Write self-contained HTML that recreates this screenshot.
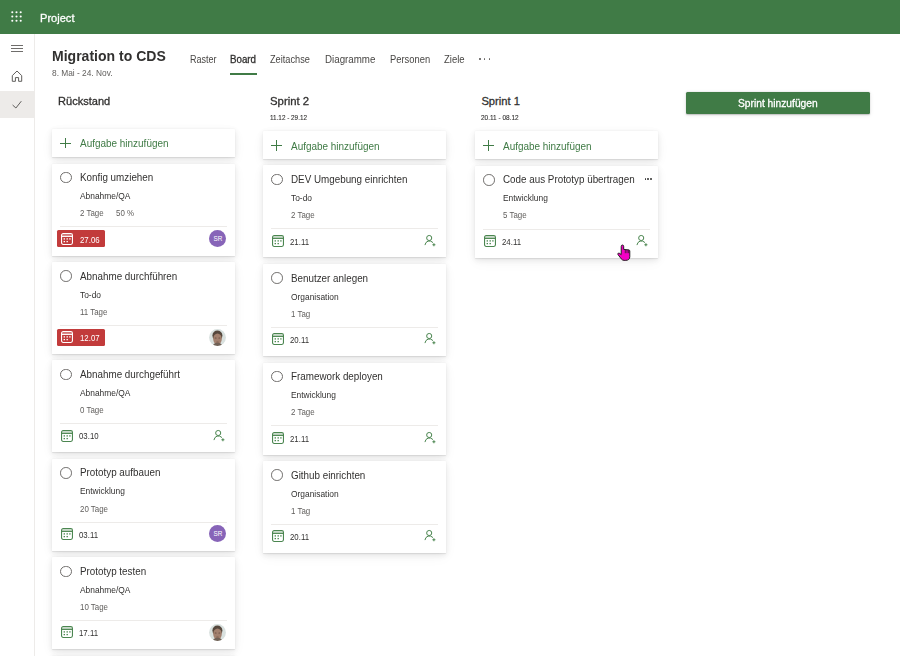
<!DOCTYPE html>
<html><head><meta charset="utf-8"><title>Project Board</title><style>
*{margin:0;padding:0;box-sizing:border-box}
html,body{width:900px;height:656px;overflow:hidden;background:#fff;font-family:"Liberation Sans",sans-serif}
.t{position:absolute;white-space:nowrap;line-height:1;transform-origin:0 0}
.ic{position:absolute;overflow:visible}
#hdr{position:absolute;left:0;top:0;width:900px;height:34px;background:#407b46}
#rail{position:absolute;left:0;top:34px;width:34.5px;height:622px;border-right:1px solid #edebe9;background:#fff}
#railsel{position:absolute;left:0;top:90.5px;width:34px;height:27.6px;background:#edebe9}
.ham{position:absolute;left:11px;top:45px;width:11.6px}
.ham i{display:block;height:1px;background:#6f6d6b;margin-bottom:2px}
#uline{position:absolute;left:229.6px;top:73px;width:27.4px;height:2px;background:#407b46}
.more{position:absolute;left:479px;top:58.3px;width:12px;height:2px}
.more i{position:absolute;top:0;width:1.5px;height:1.5px;border-radius:50%;background:#605e5c}
.more i:nth-child(1){left:0}.more i:nth-child(2){left:4.8px}.more i:nth-child(3){left:9.6px}
#addsprint{position:absolute;left:686.2px;top:91.5px;width:183.6px;height:22.7px;background:#407b46;border-radius:1.5px;box-shadow:0 0.5px 1.5px rgba(0,0,0,.22),0 1px 5px rgba(0,0,0,.08)}
.card{position:absolute;width:183px;height:92px;background:#fff;border-radius:0.5px;box-shadow:0 2px 6px rgba(0,0,0,.095),0 0.3px 1.2px rgba(0,0,0,.09),0 4px 14px rgba(0,0,0,.04)}
.card.add{height:28.1px}
.plus{position:absolute;width:11px;height:11px}
.plus i{position:absolute;left:0;top:5px;width:11px;height:1px;background:#407b46}
.plus b{position:absolute;left:5px;top:0;width:1px;height:10.8px;background:#407b46}
.circ{position:absolute;width:11.6px;height:11.6px;border:1px solid #6f6d6b;border-radius:50%}
.div{position:absolute;width:166.5px;height:1px;background:#edebe9}
.late{position:absolute;width:47.5px;height:16.8px;background:#c23b3b;border-radius:1.5px}
.av{position:absolute;width:17px;height:17px;border-radius:50%;background:#8764b8;color:#fff;font-size:6.4px;font-weight:400;text-align:center;line-height:17.6px;letter-spacing:-0.1px}
.avp{position:absolute;width:17px;height:17px;border-radius:50%;background:radial-gradient(circle at 50% 45%,#b0866a 0,#8a6048 35%,#5b4034 60%,#8f9a96 75%,#c9d0cc 100%)}
.dots{position:absolute;width:9px;height:2px}
.dots i{position:absolute;top:-0.2px;width:1.9px;height:1.9px;border-radius:50%;background:#323130}
.dots i:nth-child(1){left:0}.dots i:nth-child(2){left:2.9px}.dots i:nth-child(3){left:5.8px}
</style></head>
<body>
<div id="hdr"></div>
<svg class="ic" style="left:10px;top:10px" width="14" height="14" viewBox="0 0 14 14"><g fill="#fff"><circle cx="2.3" cy="2.3" r="1.05"/><circle cx="6.5" cy="2.3" r="1.05"/><circle cx="10.7" cy="2.3" r="1.05"/><circle cx="2.3" cy="6.5" r="1.05"/><circle cx="6.5" cy="6.5" r="1.05"/><circle cx="10.7" cy="6.5" r="1.05"/><circle cx="2.3" cy="10.7" r="1.05"/><circle cx="6.5" cy="10.7" r="1.05"/><circle cx="10.7" cy="10.7" r="1.05"/></g></svg>
<div class="t" style="left:40.00px;top:13px;font-size:11.2px;color:#ffffff;font-weight:400;transform:scaleX(0.99);-webkit-text-stroke:0.3px #fff;">Project</div>
<div id="rail"></div>
<div id="railsel"></div>
<div class="ham"><i></i><i></i><i></i></div>
<svg class="ic" style="left:11px;top:70px" width="12" height="12" viewBox="0 0 12 12"><path d="M1.3 11.3 V5.6 L6 1 L10.7 5.6 V11.3 H7.6 V7.6 H4.4 V11.3 Z" fill="none" stroke="#605e5c" stroke-width="1" stroke-linejoin="round"/></svg>
<svg class="ic" style="left:11px;top:99px" width="12" height="12" viewBox="0 0 12 12"><path d="M1.6 6.0 L4.9 9.0 L10.3 2.2" fill="none" stroke="#605e5c" stroke-width="1"/></svg>
<div class="t" style="left:52.00px;top:48px;font-size:15.0px;color:#323130;font-weight:700;transform:scaleX(0.935);">Migration to CDS</div>
<div class="t" style="left:52.10px;top:69px;font-size:8.4px;color:#605e5c;font-weight:400;transform:scaleX(0.995);">8. Mai - 24. Nov.</div>
<div class="t" style="left:190.40px;top:55px;font-size:10.0px;color:#484644;font-weight:400;transform:scaleX(0.9);">Raster</div>
<div class="t" style="left:230.00px;top:55px;font-size:10.0px;color:#323130;font-weight:400;transform:scaleX(0.975);-webkit-text-stroke:0.3px #323130;">Board</div>
<div class="t" style="left:269.70px;top:55px;font-size:10.0px;color:#484644;font-weight:400;transform:scaleX(0.92);">Zeitachse</div>
<div class="t" style="left:325.10px;top:55px;font-size:10.0px;color:#484644;font-weight:400;transform:scaleX(0.975);">Diagramme</div>
<div class="t" style="left:390.10px;top:55px;font-size:10.0px;color:#484644;font-weight:400;transform:scaleX(0.937);">Personen</div>
<div class="t" style="left:443.70px;top:55px;font-size:10.0px;color:#484644;font-weight:400;transform:scaleX(0.95);">Ziele</div>
<div id="uline"></div>
<div class="more"><i></i><i></i><i></i></div>
<div class="t" style="left:58.30px;top:96px;font-size:11.2px;color:#323130;font-weight:400;transform:scaleX(0.988);-webkit-text-stroke:0.3px #323130;">Rückstand</div>
<div class="t" style="left:270.00px;top:96px;font-size:11.2px;color:#323130;font-weight:400;transform:scaleX(1.015);-webkit-text-stroke:0.3px #323130;">Sprint 2</div>
<div class="t" style="left:269.50px;top:114px;font-size:7.4px;color:#323130;font-weight:400;transform:scaleX(0.86);-webkit-text-stroke:0.12px #323130;">11.12 - 29.12</div>
<div class="t" style="left:481.40px;top:96px;font-size:11.2px;color:#323130;font-weight:400;-webkit-text-stroke:0.3px #323130;">Sprint 1</div>
<div class="t" style="left:480.90px;top:114px;font-size:7.4px;color:#323130;font-weight:400;transform:scaleX(0.875);-webkit-text-stroke:0.12px #323130;">20.11 - 08.12</div>
<div id="addsprint"></div>
<div class="t" style="left:737.50px;top:98px;font-size:10.5px;color:#ffffff;font-weight:400;transform:scaleX(0.975);-webkit-text-stroke:0.3px #fff;">Sprint hinzufügen</div>
<div class="card add" style="left:52.00px;top:128.60px"></div>
<div class="plus" style="left:59.80px;top:137.50px"><i></i><b></b></div>
<div class="t" style="left:79.90px;top:139px;font-size:10.0px;color:#407b46;font-weight:400;transform:scaleX(0.995);">Aufgabe hinzufügen</div>
<div class="card add" style="left:263.00px;top:131.20px"></div>
<div class="plus" style="left:270.80px;top:140.10px"><i></i><b></b></div>
<div class="t" style="left:290.90px;top:142px;font-size:10.0px;color:#407b46;font-weight:400;transform:scaleX(0.995);">Aufgabe hinzufügen</div>
<div class="card add" style="left:475.00px;top:131.20px"></div>
<div class="plus" style="left:482.80px;top:140.10px"><i></i><b></b></div>
<div class="t" style="left:502.90px;top:142px;font-size:10.0px;color:#407b46;font-weight:400;transform:scaleX(0.995);">Aufgabe hinzufügen</div>
<div class="card" style="left:52.00px;top:163.50px"></div>
<div class="circ" style="left:60.00px;top:171.90px"></div>
<div class="t" style="left:80.10px;top:173px;font-size:10.3px;color:#323130;font-weight:400;transform:scaleX(0.955);">Konfig umziehen</div>
<div class="t" style="left:80.10px;top:192px;font-size:8.8px;color:#323130;font-weight:400;transform:scaleX(0.955);">Abnahme/QA</div>
<div class="t" style="left:80.10px;top:209px;font-size:8.7px;color:#605e5c;font-weight:400;transform:scaleX(0.91);">2 Tage</div>
<div class="t" style="left:115.60px;top:209px;font-size:8.7px;color:#605e5c;font-weight:400;transform:scaleX(0.91);">50 %</div>
<div class="div" style="left:60.00px;top:226.30px"></div>
<div class="late" style="left:57.10px;top:230.40px"></div>
<svg class="ic" style="left:61.00px;top:232.80px" width="12" height="12" viewBox="0 0 12 12"><rect x="0.55" y="0.55" width="10.9" height="10.9" rx="1.6" fill="none" stroke="#ffffff" stroke-width="1.1"/><rect x="1" y="1" width="10" height="2.4" fill="#ffffff" fill-opacity="0.3"/><line x1="0.6" y1="3.4" x2="11.4" y2="3.4" stroke="#ffffff" stroke-width="1.1"/><g fill="#ffffff"><rect x="2.6" y="5.25" width="1.4" height="1.3"/><rect x="5.5" y="5.25" width="1.4" height="1.3"/><rect x="8.2" y="5.25" width="1.4" height="1.3"/><rect x="2.6" y="7.95" width="1.4" height="1.3"/><rect x="5.5" y="7.95" width="1.4" height="1.3"/></g></svg><div class="t" style="left:79.60px;top:236px;font-size:8.8px;color:#ffffff;font-weight:400;transform:scaleX(0.89);">27.06</div>
<div class="av" style="left:209.40px;top:230.10px">SR</div>
<div class="card" style="left:52.00px;top:261.90px"></div>
<div class="circ" style="left:60.00px;top:270.30px"></div>
<div class="t" style="left:80.10px;top:272px;font-size:10.3px;color:#323130;font-weight:400;transform:scaleX(0.955);">Abnahme durchführen</div>
<div class="t" style="left:80.10px;top:291px;font-size:8.8px;color:#323130;font-weight:400;transform:scaleX(0.955);">To-do</div>
<div class="t" style="left:80.10px;top:308px;font-size:8.7px;color:#605e5c;font-weight:400;transform:scaleX(0.91);">11 Tage</div>
<div class="div" style="left:60.00px;top:324.70px"></div>
<div class="late" style="left:57.10px;top:328.80px"></div>
<svg class="ic" style="left:61.00px;top:331.20px" width="12" height="12" viewBox="0 0 12 12"><rect x="0.55" y="0.55" width="10.9" height="10.9" rx="1.6" fill="none" stroke="#ffffff" stroke-width="1.1"/><rect x="1" y="1" width="10" height="2.4" fill="#ffffff" fill-opacity="0.3"/><line x1="0.6" y1="3.4" x2="11.4" y2="3.4" stroke="#ffffff" stroke-width="1.1"/><g fill="#ffffff"><rect x="2.6" y="5.25" width="1.4" height="1.3"/><rect x="5.5" y="5.25" width="1.4" height="1.3"/><rect x="8.2" y="5.25" width="1.4" height="1.3"/><rect x="2.6" y="7.95" width="1.4" height="1.3"/><rect x="5.5" y="7.95" width="1.4" height="1.3"/></g></svg><div class="t" style="left:79.60px;top:334px;font-size:8.8px;color:#ffffff;font-weight:400;transform:scaleX(0.89);">12.07</div>
<svg class="ic" style="left:209.40px;top:328.50px" width="17" height="17" viewBox="0 0 17 17"><defs><clipPath id="ac"><circle cx="8.5" cy="8.5" r="8.4"/></clipPath><filter id="af" x="-10%" y="-10%" width="120%" height="120%"><feGaussianBlur stdDeviation="0.35"/></filter></defs><g clip-path="url(#ac)"><rect width="17" height="17" fill="#d9e1df"/><g filter="url(#af)"><ellipse cx="8.4" cy="6.6" rx="5.0" ry="5.0" fill="#55473c"/><ellipse cx="8.5" cy="10.0" rx="4.3" ry="5.6" fill="#a2806e"/><ellipse cx="8.5" cy="17.2" rx="4.8" ry="3.4" fill="#6f6055"/><ellipse cx="6.7" cy="9.0" rx="1.0" ry="0.5" fill="#6a5044"/><ellipse cx="10.3" cy="9.0" rx="1.0" ry="0.5" fill="#6a5044"/><ellipse cx="8.5" cy="12.9" rx="1.5" ry="0.5" fill="#7a5c4e"/></g></g></svg><div class="card" style="left:52.00px;top:360.30px"></div>
<div class="circ" style="left:60.00px;top:368.70px"></div>
<div class="t" style="left:80.10px;top:370px;font-size:10.3px;color:#323130;font-weight:400;transform:scaleX(0.955);">Abnahme durchgeführt</div>
<div class="t" style="left:80.10px;top:389px;font-size:8.8px;color:#323130;font-weight:400;transform:scaleX(0.955);">Abnahme/QA</div>
<div class="t" style="left:80.10px;top:406px;font-size:8.7px;color:#605e5c;font-weight:400;transform:scaleX(0.91);">0 Tage</div>
<div class="div" style="left:60.00px;top:423.10px"></div>
<svg class="ic" style="left:61.30px;top:429.60px" width="12" height="12" viewBox="0 0 12 12"><rect x="0.55" y="0.55" width="10.9" height="10.9" rx="1.6" fill="none" stroke="#4b8650" stroke-width="1.1"/><rect x="1" y="1" width="10" height="2.4" fill="#4b8650" fill-opacity="0.3"/><line x1="0.6" y1="3.4" x2="11.4" y2="3.4" stroke="#4b8650" stroke-width="1.1"/><g fill="#4b8650"><rect x="2.6" y="5.25" width="1.4" height="1.3"/><rect x="5.5" y="5.25" width="1.4" height="1.3"/><rect x="8.2" y="5.25" width="1.4" height="1.3"/><rect x="2.6" y="7.95" width="1.4" height="1.3"/><rect x="5.5" y="7.95" width="1.4" height="1.3"/></g></svg><div class="t" style="left:79.40px;top:432px;font-size:8.8px;color:#323130;font-weight:400;transform:scaleX(0.89);">03.10</div>
<svg class="ic" style="left:212.60px;top:429.70px" width="12" height="12" viewBox="0 0 12 12"><circle cx="5.2" cy="3.0" r="2.55" fill="none" stroke="#4b8650" stroke-width="1"/><path d="M1.0 9.7 A4.5 4.5 0 0 1 8.7 7.3" fill="none" stroke="#4b8650" stroke-width="1" stroke-linecap="round"/><path d="M9.9 8.3 V11.3 M8.4 9.8 H11.4" stroke="#4b8650" stroke-width="1.05"/></svg><div class="card" style="left:52.00px;top:458.70px"></div>
<div class="circ" style="left:60.00px;top:467.10px"></div>
<div class="t" style="left:80.10px;top:468px;font-size:10.3px;color:#323130;font-weight:400;transform:scaleX(0.955);">Prototyp aufbauen</div>
<div class="t" style="left:80.10px;top:487px;font-size:8.8px;color:#323130;font-weight:400;transform:scaleX(0.955);">Entwicklung</div>
<div class="t" style="left:80.10px;top:505px;font-size:8.7px;color:#605e5c;font-weight:400;transform:scaleX(0.91);">20 Tage</div>
<div class="div" style="left:60.00px;top:521.50px"></div>
<svg class="ic" style="left:61.30px;top:528.00px" width="12" height="12" viewBox="0 0 12 12"><rect x="0.55" y="0.55" width="10.9" height="10.9" rx="1.6" fill="none" stroke="#4b8650" stroke-width="1.1"/><rect x="1" y="1" width="10" height="2.4" fill="#4b8650" fill-opacity="0.3"/><line x1="0.6" y1="3.4" x2="11.4" y2="3.4" stroke="#4b8650" stroke-width="1.1"/><g fill="#4b8650"><rect x="2.6" y="5.25" width="1.4" height="1.3"/><rect x="5.5" y="5.25" width="1.4" height="1.3"/><rect x="8.2" y="5.25" width="1.4" height="1.3"/><rect x="2.6" y="7.95" width="1.4" height="1.3"/><rect x="5.5" y="7.95" width="1.4" height="1.3"/></g></svg><div class="t" style="left:79.40px;top:531px;font-size:8.8px;color:#323130;font-weight:400;transform:scaleX(0.89);">03.11</div>
<div class="av" style="left:209.40px;top:525.30px">SR</div>
<div class="card" style="left:52.00px;top:557.10px"></div>
<div class="circ" style="left:60.00px;top:565.50px"></div>
<div class="t" style="left:80.10px;top:567px;font-size:10.3px;color:#323130;font-weight:400;transform:scaleX(0.955);">Prototyp testen</div>
<div class="t" style="left:80.10px;top:586px;font-size:8.8px;color:#323130;font-weight:400;transform:scaleX(0.955);">Abnahme/QA</div>
<div class="t" style="left:80.10px;top:603px;font-size:8.7px;color:#605e5c;font-weight:400;transform:scaleX(0.91);">10 Tage</div>
<div class="div" style="left:60.00px;top:619.90px"></div>
<svg class="ic" style="left:61.30px;top:626.40px" width="12" height="12" viewBox="0 0 12 12"><rect x="0.55" y="0.55" width="10.9" height="10.9" rx="1.6" fill="none" stroke="#4b8650" stroke-width="1.1"/><rect x="1" y="1" width="10" height="2.4" fill="#4b8650" fill-opacity="0.3"/><line x1="0.6" y1="3.4" x2="11.4" y2="3.4" stroke="#4b8650" stroke-width="1.1"/><g fill="#4b8650"><rect x="2.6" y="5.25" width="1.4" height="1.3"/><rect x="5.5" y="5.25" width="1.4" height="1.3"/><rect x="8.2" y="5.25" width="1.4" height="1.3"/><rect x="2.6" y="7.95" width="1.4" height="1.3"/><rect x="5.5" y="7.95" width="1.4" height="1.3"/></g></svg><div class="t" style="left:79.40px;top:629px;font-size:8.8px;color:#323130;font-weight:400;transform:scaleX(0.89);">17.11</div>
<svg class="ic" style="left:209.40px;top:623.70px" width="17" height="17" viewBox="0 0 17 17"><defs><clipPath id="ac"><circle cx="8.5" cy="8.5" r="8.4"/></clipPath><filter id="af" x="-10%" y="-10%" width="120%" height="120%"><feGaussianBlur stdDeviation="0.35"/></filter></defs><g clip-path="url(#ac)"><rect width="17" height="17" fill="#d9e1df"/><g filter="url(#af)"><ellipse cx="8.4" cy="6.6" rx="5.0" ry="5.0" fill="#55473c"/><ellipse cx="8.5" cy="10.0" rx="4.3" ry="5.6" fill="#a2806e"/><ellipse cx="8.5" cy="17.2" rx="4.8" ry="3.4" fill="#6f6055"/><ellipse cx="6.7" cy="9.0" rx="1.0" ry="0.5" fill="#6a5044"/><ellipse cx="10.3" cy="9.0" rx="1.0" ry="0.5" fill="#6a5044"/><ellipse cx="8.5" cy="12.9" rx="1.5" ry="0.5" fill="#7a5c4e"/></g></g></svg><div class="card" style="left:52px;top:655.7px"></div>
<div class="card" style="left:263.00px;top:165.40px"></div>
<div class="circ" style="left:271.00px;top:173.80px"></div>
<div class="t" style="left:291.10px;top:175px;font-size:10.3px;color:#323130;font-weight:400;transform:scaleX(0.955);">DEV Umgebung einrichten</div>
<div class="t" style="left:291.10px;top:194px;font-size:8.8px;color:#323130;font-weight:400;transform:scaleX(0.955);">To-do</div>
<div class="t" style="left:291.10px;top:211px;font-size:8.7px;color:#605e5c;font-weight:400;transform:scaleX(0.91);">2 Tage</div>
<div class="div" style="left:271.00px;top:228.20px"></div>
<svg class="ic" style="left:272.30px;top:234.70px" width="12" height="12" viewBox="0 0 12 12"><rect x="0.55" y="0.55" width="10.9" height="10.9" rx="1.6" fill="none" stroke="#4b8650" stroke-width="1.1"/><rect x="1" y="1" width="10" height="2.4" fill="#4b8650" fill-opacity="0.3"/><line x1="0.6" y1="3.4" x2="11.4" y2="3.4" stroke="#4b8650" stroke-width="1.1"/><g fill="#4b8650"><rect x="2.6" y="5.25" width="1.4" height="1.3"/><rect x="5.5" y="5.25" width="1.4" height="1.3"/><rect x="8.2" y="5.25" width="1.4" height="1.3"/><rect x="2.6" y="7.95" width="1.4" height="1.3"/><rect x="5.5" y="7.95" width="1.4" height="1.3"/></g></svg><div class="t" style="left:290.40px;top:238px;font-size:8.8px;color:#323130;font-weight:400;transform:scaleX(0.89);">21.11</div>
<svg class="ic" style="left:423.60px;top:234.80px" width="12" height="12" viewBox="0 0 12 12"><circle cx="5.2" cy="3.0" r="2.55" fill="none" stroke="#4b8650" stroke-width="1"/><path d="M1.0 9.7 A4.5 4.5 0 0 1 8.7 7.3" fill="none" stroke="#4b8650" stroke-width="1" stroke-linecap="round"/><path d="M9.9 8.3 V11.3 M8.4 9.8 H11.4" stroke="#4b8650" stroke-width="1.05"/></svg><div class="card" style="left:263.00px;top:263.95px"></div>
<div class="circ" style="left:271.00px;top:272.35px"></div>
<div class="t" style="left:291.10px;top:274px;font-size:10.3px;color:#323130;font-weight:400;transform:scaleX(0.955);">Benutzer anlegen</div>
<div class="t" style="left:291.10px;top:293px;font-size:8.8px;color:#323130;font-weight:400;transform:scaleX(0.955);">Organisation</div>
<div class="t" style="left:291.10px;top:310px;font-size:8.7px;color:#605e5c;font-weight:400;transform:scaleX(0.91);">1 Tag</div>
<div class="div" style="left:271.00px;top:326.75px"></div>
<svg class="ic" style="left:272.30px;top:333.25px" width="12" height="12" viewBox="0 0 12 12"><rect x="0.55" y="0.55" width="10.9" height="10.9" rx="1.6" fill="none" stroke="#4b8650" stroke-width="1.1"/><rect x="1" y="1" width="10" height="2.4" fill="#4b8650" fill-opacity="0.3"/><line x1="0.6" y1="3.4" x2="11.4" y2="3.4" stroke="#4b8650" stroke-width="1.1"/><g fill="#4b8650"><rect x="2.6" y="5.25" width="1.4" height="1.3"/><rect x="5.5" y="5.25" width="1.4" height="1.3"/><rect x="8.2" y="5.25" width="1.4" height="1.3"/><rect x="2.6" y="7.95" width="1.4" height="1.3"/><rect x="5.5" y="7.95" width="1.4" height="1.3"/></g></svg><div class="t" style="left:290.40px;top:336px;font-size:8.8px;color:#323130;font-weight:400;transform:scaleX(0.89);">20.11</div>
<svg class="ic" style="left:423.60px;top:333.35px" width="12" height="12" viewBox="0 0 12 12"><circle cx="5.2" cy="3.0" r="2.55" fill="none" stroke="#4b8650" stroke-width="1"/><path d="M1.0 9.7 A4.5 4.5 0 0 1 8.7 7.3" fill="none" stroke="#4b8650" stroke-width="1" stroke-linecap="round"/><path d="M9.9 8.3 V11.3 M8.4 9.8 H11.4" stroke="#4b8650" stroke-width="1.05"/></svg><div class="card" style="left:263.00px;top:362.50px"></div>
<div class="circ" style="left:271.00px;top:370.90px"></div>
<div class="t" style="left:291.10px;top:372px;font-size:10.3px;color:#323130;font-weight:400;transform:scaleX(0.955);">Framework deployen</div>
<div class="t" style="left:291.10px;top:391px;font-size:8.8px;color:#323130;font-weight:400;transform:scaleX(0.955);">Entwicklung</div>
<div class="t" style="left:291.10px;top:408px;font-size:8.7px;color:#605e5c;font-weight:400;transform:scaleX(0.91);">2 Tage</div>
<div class="div" style="left:271.00px;top:425.30px"></div>
<svg class="ic" style="left:272.30px;top:431.80px" width="12" height="12" viewBox="0 0 12 12"><rect x="0.55" y="0.55" width="10.9" height="10.9" rx="1.6" fill="none" stroke="#4b8650" stroke-width="1.1"/><rect x="1" y="1" width="10" height="2.4" fill="#4b8650" fill-opacity="0.3"/><line x1="0.6" y1="3.4" x2="11.4" y2="3.4" stroke="#4b8650" stroke-width="1.1"/><g fill="#4b8650"><rect x="2.6" y="5.25" width="1.4" height="1.3"/><rect x="5.5" y="5.25" width="1.4" height="1.3"/><rect x="8.2" y="5.25" width="1.4" height="1.3"/><rect x="2.6" y="7.95" width="1.4" height="1.3"/><rect x="5.5" y="7.95" width="1.4" height="1.3"/></g></svg><div class="t" style="left:290.40px;top:435px;font-size:8.8px;color:#323130;font-weight:400;transform:scaleX(0.89);">21.11</div>
<svg class="ic" style="left:423.60px;top:431.90px" width="12" height="12" viewBox="0 0 12 12"><circle cx="5.2" cy="3.0" r="2.55" fill="none" stroke="#4b8650" stroke-width="1"/><path d="M1.0 9.7 A4.5 4.5 0 0 1 8.7 7.3" fill="none" stroke="#4b8650" stroke-width="1" stroke-linecap="round"/><path d="M9.9 8.3 V11.3 M8.4 9.8 H11.4" stroke="#4b8650" stroke-width="1.05"/></svg><div class="card" style="left:263.00px;top:461.05px"></div>
<div class="circ" style="left:271.00px;top:469.45px"></div>
<div class="t" style="left:291.10px;top:471px;font-size:10.3px;color:#323130;font-weight:400;transform:scaleX(0.955);">Github einrichten</div>
<div class="t" style="left:291.10px;top:490px;font-size:8.8px;color:#323130;font-weight:400;transform:scaleX(0.955);">Organisation</div>
<div class="t" style="left:291.10px;top:507px;font-size:8.7px;color:#605e5c;font-weight:400;transform:scaleX(0.91);">1 Tag</div>
<div class="div" style="left:271.00px;top:523.85px"></div>
<svg class="ic" style="left:272.30px;top:530.35px" width="12" height="12" viewBox="0 0 12 12"><rect x="0.55" y="0.55" width="10.9" height="10.9" rx="1.6" fill="none" stroke="#4b8650" stroke-width="1.1"/><rect x="1" y="1" width="10" height="2.4" fill="#4b8650" fill-opacity="0.3"/><line x1="0.6" y1="3.4" x2="11.4" y2="3.4" stroke="#4b8650" stroke-width="1.1"/><g fill="#4b8650"><rect x="2.6" y="5.25" width="1.4" height="1.3"/><rect x="5.5" y="5.25" width="1.4" height="1.3"/><rect x="8.2" y="5.25" width="1.4" height="1.3"/><rect x="2.6" y="7.95" width="1.4" height="1.3"/><rect x="5.5" y="7.95" width="1.4" height="1.3"/></g></svg><div class="t" style="left:290.40px;top:533px;font-size:8.8px;color:#323130;font-weight:400;transform:scaleX(0.89);">20.11</div>
<svg class="ic" style="left:423.60px;top:530.45px" width="12" height="12" viewBox="0 0 12 12"><circle cx="5.2" cy="3.0" r="2.55" fill="none" stroke="#4b8650" stroke-width="1"/><path d="M1.0 9.7 A4.5 4.5 0 0 1 8.7 7.3" fill="none" stroke="#4b8650" stroke-width="1" stroke-linecap="round"/><path d="M9.9 8.3 V11.3 M8.4 9.8 H11.4" stroke="#4b8650" stroke-width="1.05"/></svg><div class="card" style="left:475.00px;top:165.70px"></div>
<div class="circ" style="left:483.00px;top:174.10px"></div>
<div class="t" style="left:503.10px;top:175px;font-size:10.3px;color:#323130;font-weight:400;transform:scaleX(0.955);">Code aus Prototyp übertragen</div>
<div class="t" style="left:503.10px;top:194px;font-size:8.8px;color:#323130;font-weight:400;transform:scaleX(0.955);">Entwicklung</div>
<div class="t" style="left:503.10px;top:211px;font-size:8.7px;color:#605e5c;font-weight:400;transform:scaleX(0.91);">5 Tage</div>
<div class="dots" style="left:644.50px;top:178.20px"><i></i><i></i><i></i></div>
<div class="div" style="left:483.00px;top:228.50px"></div>
<svg class="ic" style="left:484.30px;top:235.00px" width="12" height="12" viewBox="0 0 12 12"><rect x="0.55" y="0.55" width="10.9" height="10.9" rx="1.6" fill="none" stroke="#4b8650" stroke-width="1.1"/><rect x="1" y="1" width="10" height="2.4" fill="#4b8650" fill-opacity="0.3"/><line x1="0.6" y1="3.4" x2="11.4" y2="3.4" stroke="#4b8650" stroke-width="1.1"/><g fill="#4b8650"><rect x="2.6" y="5.25" width="1.4" height="1.3"/><rect x="5.5" y="5.25" width="1.4" height="1.3"/><rect x="8.2" y="5.25" width="1.4" height="1.3"/><rect x="2.6" y="7.95" width="1.4" height="1.3"/><rect x="5.5" y="7.95" width="1.4" height="1.3"/></g></svg><div class="t" style="left:502.40px;top:238px;font-size:8.8px;color:#323130;font-weight:400;transform:scaleX(0.89);">24.11</div>
<svg class="ic" style="left:635.60px;top:235.10px" width="12" height="12" viewBox="0 0 12 12"><circle cx="5.2" cy="3.0" r="2.55" fill="none" stroke="#4b8650" stroke-width="1"/><path d="M1.0 9.7 A4.5 4.5 0 0 1 8.7 7.3" fill="none" stroke="#4b8650" stroke-width="1" stroke-linecap="round"/><path d="M9.9 8.3 V11.3 M8.4 9.8 H11.4" stroke="#4b8650" stroke-width="1.05"/></svg><svg class="ic" style="left:616.2px;top:242.6px" width="16" height="19" viewBox="0 0 16 19"><path d="M5.2 3.6 Q5.2 2.0 6.45 2.0 Q7.7 2.0 7.7 3.6 V6.4 L13 6.9 Q13.8 7.2 13.8 8 V13.6 Q13.8 17.4 9.5 17.4 H8.2 Q6.5 17.4 5.2 15.8 L2.0 11.6 Q1.5 10.6 2.3 10.2 Q3.0 9.8 3.8 10.5 L5.2 11.6 Z" fill="#f400c4" stroke="#111" stroke-width="0.9" stroke-linejoin="round"/><path d="M9.3 6.9 V10.2 M11.0 7.0 V10.2 M12.6 7.1 V10.2" stroke="#222" stroke-width="0.75"/></svg>
</body></html>
